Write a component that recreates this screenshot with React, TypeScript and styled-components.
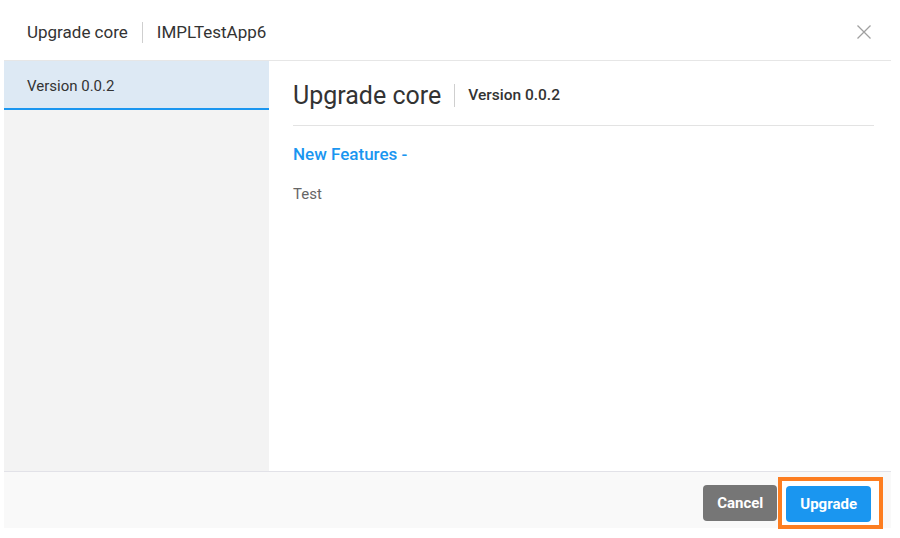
import styled, { createGlobalStyle } from 'styled-components'

const GlobalStyle = createGlobalStyle`
	html, body {
		margin: 0;
		padding: 0;
		background: #ffffff;
		font-family: Roboto, 'Liberation Sans', sans-serif;
	}
`

const App = () => {
	return (
		<Page>
			<GlobalStyle />
			<Modal>
				<Header>
					<HeaderTitle>Upgrade core</HeaderTitle>
					<HeaderDivider />
					<HeaderTitle>IMPLTestApp6</HeaderTitle>
					<CloseButton aria-label="Close">
						<svg width="14" height="14" viewBox="0 0 14 14">
							<path d="M0.5 0.5 L13.5 13.5 M13.5 0.5 L0.5 13.5" stroke="#a0a0a0" strokeWidth="1.3" fill="none" />
						</svg>
					</CloseButton>
				</Header>
				<Body>
					<Sidebar>
						<SidebarItem active>Version 0.0.2</SidebarItem>
					</Sidebar>
					<Content>
						<TitleRow>
							<Title>Upgrade core</Title>
							<TitleDivider />
							<Subtitle>Version 0.0.2</Subtitle>
						</TitleRow>
						<SectionHeading>New Features -</SectionHeading>
						<Note>Test</Note>
					</Content>
				</Body>
				<Footer>
					<Button variant="secondary">Cancel</Button>
					<Highlight>
						<Button variant="primary">Upgrade</Button>
					</Highlight>
				</Footer>
			</Modal>
		</Page>
	)
}

export default App

const Page = styled.div`
	width: 900px;
	height: 538px;
	padding: 0 9px 0 4px;
	box-sizing: border-box;
`

const Modal = styled.div`
	width: 887px;
	height: 528px;
	display: flex;
	flex-direction: column;
	background: #ffffff;
`

const Header = styled.div`
	height: 61px;
	box-sizing: border-box;
	display: flex;
	align-items: center;
	padding: 4px 20px 0 23px;
	border-bottom: 1px solid #e6e6e6;
	flex-shrink: 0;
`

const HeaderTitle = styled.span`
	font-size: 17px;
	color: #333333;
	line-height: 1;
`

const HeaderDivider = styled.span`
	width: 1px;
	height: 21px;
	background: #cfcfcf;
	margin: 0 14px;
`

const CloseButton = styled.button`
	margin-left: auto;
	background: none;
	border: none;
	padding: 0;
	width: 14px;
	height: 14px;
	display: flex;
	cursor: pointer;
`

const Body = styled.div`
	flex: 1;
	display: flex;
	min-height: 0;
`

const Sidebar = styled.div`
	width: 265px;
	background: #f3f3f3;
	flex-shrink: 0;
`

const SidebarItem = styled.div<{ active?: boolean }>`
	height: 49px;
	display: flex;
	align-items: center;
	padding: 2px 23px 0;
	box-sizing: border-box;
	font-size: 15px;
	color: #333333;
	background: ${(p) => (p.active ? '#dde9f4' : 'transparent')};
	border-bottom: 2px solid ${(p) => (p.active ? '#1a96f0' : 'transparent')};
`

const Content = styled.div`
	flex: 1;
	padding: 0 17px 0 24px;
`

const TitleRow = styled.div`
	height: 65px;
	box-sizing: border-box;
	padding-top: 4px;
	display: flex;
	align-items: center;
	border-bottom: 1px solid #e3e3e3;
`

const Title = styled.h2`
	margin: 0;
	font-size: 25px;
	font-weight: 400;
	color: #333333;
`

const TitleDivider = styled.span`
	width: 1px;
	height: 23px;
	background: #cfcfcf;
	margin: 0 13px;
`

const Subtitle = styled.span`
	font-size: 15.5px;
	font-weight: 500;
	color: #333333;
`

const SectionHeading = styled.h3`
	margin: 18px 0 0;
	font-size: 17px;
	font-weight: 500;
	color: #1a96f0;
`

const Note = styled.p`
	margin: 21px 0 0;
	font-size: 15px;
	color: #666666;
`

const Footer = styled.div`
	height: 57px;
	box-sizing: border-box;
	flex-shrink: 0;
	display: flex;
	align-items: center;
	justify-content: flex-end;
	gap: 9px;
	padding: 5px 20px 0;
	background: #f9f9f9;
	border-top: 1px solid #e2e2e8;
`

const Highlight = styled.div`
	display: flex;
	padding: 5px 8px 3px 4px;
	margin: 0 -12px 0 -8px;
	border: 4px solid #fd7e21;
	background: #ffffff;
`

const Button = styled.button<{ variant: 'primary' | 'secondary' }>`
	height: 36px;
	padding: 0 14px;
	border: none;
	border-radius: 4px;
	font-family: Roboto, 'Liberation Sans', sans-serif;
	font-size: 15px;
	font-weight: 700;
	color: #ffffff;
	background: ${(p) => (p.variant === 'primary' ? '#1a96f0' : '#767676')};
	cursor: pointer;
`
